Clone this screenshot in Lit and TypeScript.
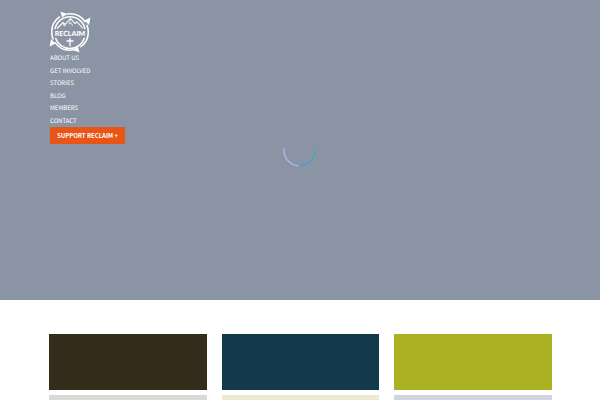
import { LitElement, html, css } from "lit";
import { customElement } from "lit/decorators.js";

const LINKS = ["About Us", "Get Involved", "Stories", "Blog", "Members", "Contact"];

@customElement("reclaim-logo")
export class ReclaimLogo extends LitElement {
  static styles = css`
    :host { display: block; width: 44px; height: 44px; }
    svg { display: block; width: 100%; height: 100%; }
    .line { fill: none; stroke: #fff; }
    .solid { fill: #fff; }
    .word { fill: #fff; font: 900 7px Lato, sans-serif; text-anchor: middle; }
  `;
  render() {
    return html`<svg viewBox="0 0 44 44" role="img" aria-label="Reclaim">
      <circle class="line" cx="22" cy="22" r="18.3" stroke-width="1.6" stroke-dasharray="25.7 3" stroke-dashoffset="8" />
      <path class="line" stroke-width="1.5" d="M7 19A15.300 15.300 0 0 1 37 19M7.500 28A15.300 15.300 0 0 0 36.500 28" />
      <path class="solid" d="M12.500 1.500L19 4L14 7.500ZM42.500 7.500L41 15L36.500 10.500ZM1.500 36.500L3 29L7.500 33.500ZM31.500 42.500L25 40L30 36.500Z" />
      <path class="line" stroke-width="1.1" d="M9 18.500L15 12.500L17 14.500L22.500 8.500L27 13.500L29 12L35 18.500" />
      <path class="line" stroke-width="0.7" d="M15 13L16 16L18 15M22.500 9L21 14L23.500 13L24.500 16" />
      <text class="word" x="22" y="26">RECLAIM</text>
      <path class="line" stroke-width="1.3" d="M22 28V36.500M18.500 31H25.500" />
    </svg>`;
  }
}

@customElement("app-root")
export class AppRoot extends LitElement {
  static styles = css`
    :host {
      display: block;
      height: 100vh;
      overflow: hidden;
      background: #fff;
      font-family: "Noto Sans CJK SC", "Noto Sans", sans-serif;
      text-rendering: geometricPrecision;
    }
    .hero {
      box-sizing: border-box;
      position: relative;
      min-height: 75vh;
      padding: 10px 48px 0 49px;
      background: #8b94a5;
    }
    .home { display: block; width: 44px; margin-left: -1px; margin-bottom: -2px; }
    .links {
      display: grid;
      grid-auto-rows: 1fr;
      height: 75px;
      margin: 0;
      padding: 0 0 0 1px;
      list-style: none;
      font-size: 6px;
      line-height: 12px;
      text-transform: uppercase;
    }
    .links a { color: #fff; text-decoration: none; }
    .support {
      display: block;
      margin-left: 1px;
      height: 17px;
      padding: 0 7px;
      border: 0;
      background: #e95516;
      color: #fff;
      font: inherit;
      font-size: 6px;
      font-weight: 700;
      line-height: 17px;
      text-transform: uppercase;
    }
    .spinner {
      position: absolute;
      top: 50%;
      left: 50%;
      width: 34px;
      height: 34px;
      transform: translate(-50%, -50%);
    }
    .arc { fill: none; stroke-width: 1.3; stroke-linecap: round; }
    .pale { stroke: #b4bbe8; }
    .teal { stroke: #3fa5c4; }
    .tiles {
      display: grid;
      grid-template-columns: repeat(3, 1fr);
      gap: 5px 15px;
      padding: 34px 48px 0 49px;
    }
    .tile { height: 56px; }
    .brown { background: #332c1b; }
    .navy { background: #133a4c; }
    .lime { background: #aab122; }
    .grey { background: #dbd8d5; }
    .cream { background: #ecebd0; }
    .mist { background: #d0d4e0; }
  `;

  render() {
    return html`
      <header class="hero">
        <a class="home" href="#"><reclaim-logo></reclaim-logo></a>
        <nav>
          <ul class="links">
            ${LINKS.map((label) => html`<li><a href="#">${label}</a></li>`)}
          </ul>
        </nav>
        <button class="support" type="button">Support Reclaim +</button>
        <svg class="spinner" viewBox="0 0 34 34" aria-hidden="true">
          <path class="arc pale" d="M1 16A16 16 0 0 0 16 33" />
          <path class="arc teal" d="M16 33A16 16 0 0 0 32 17" />
        </svg>
      </header>
      <main class="tiles">
        ${["brown", "navy", "lime", "grey", "cream", "mist"].map(
          (tone) => html`<div class="tile ${tone}"></div>`
        )}
      </main>
    `;
  }
}
